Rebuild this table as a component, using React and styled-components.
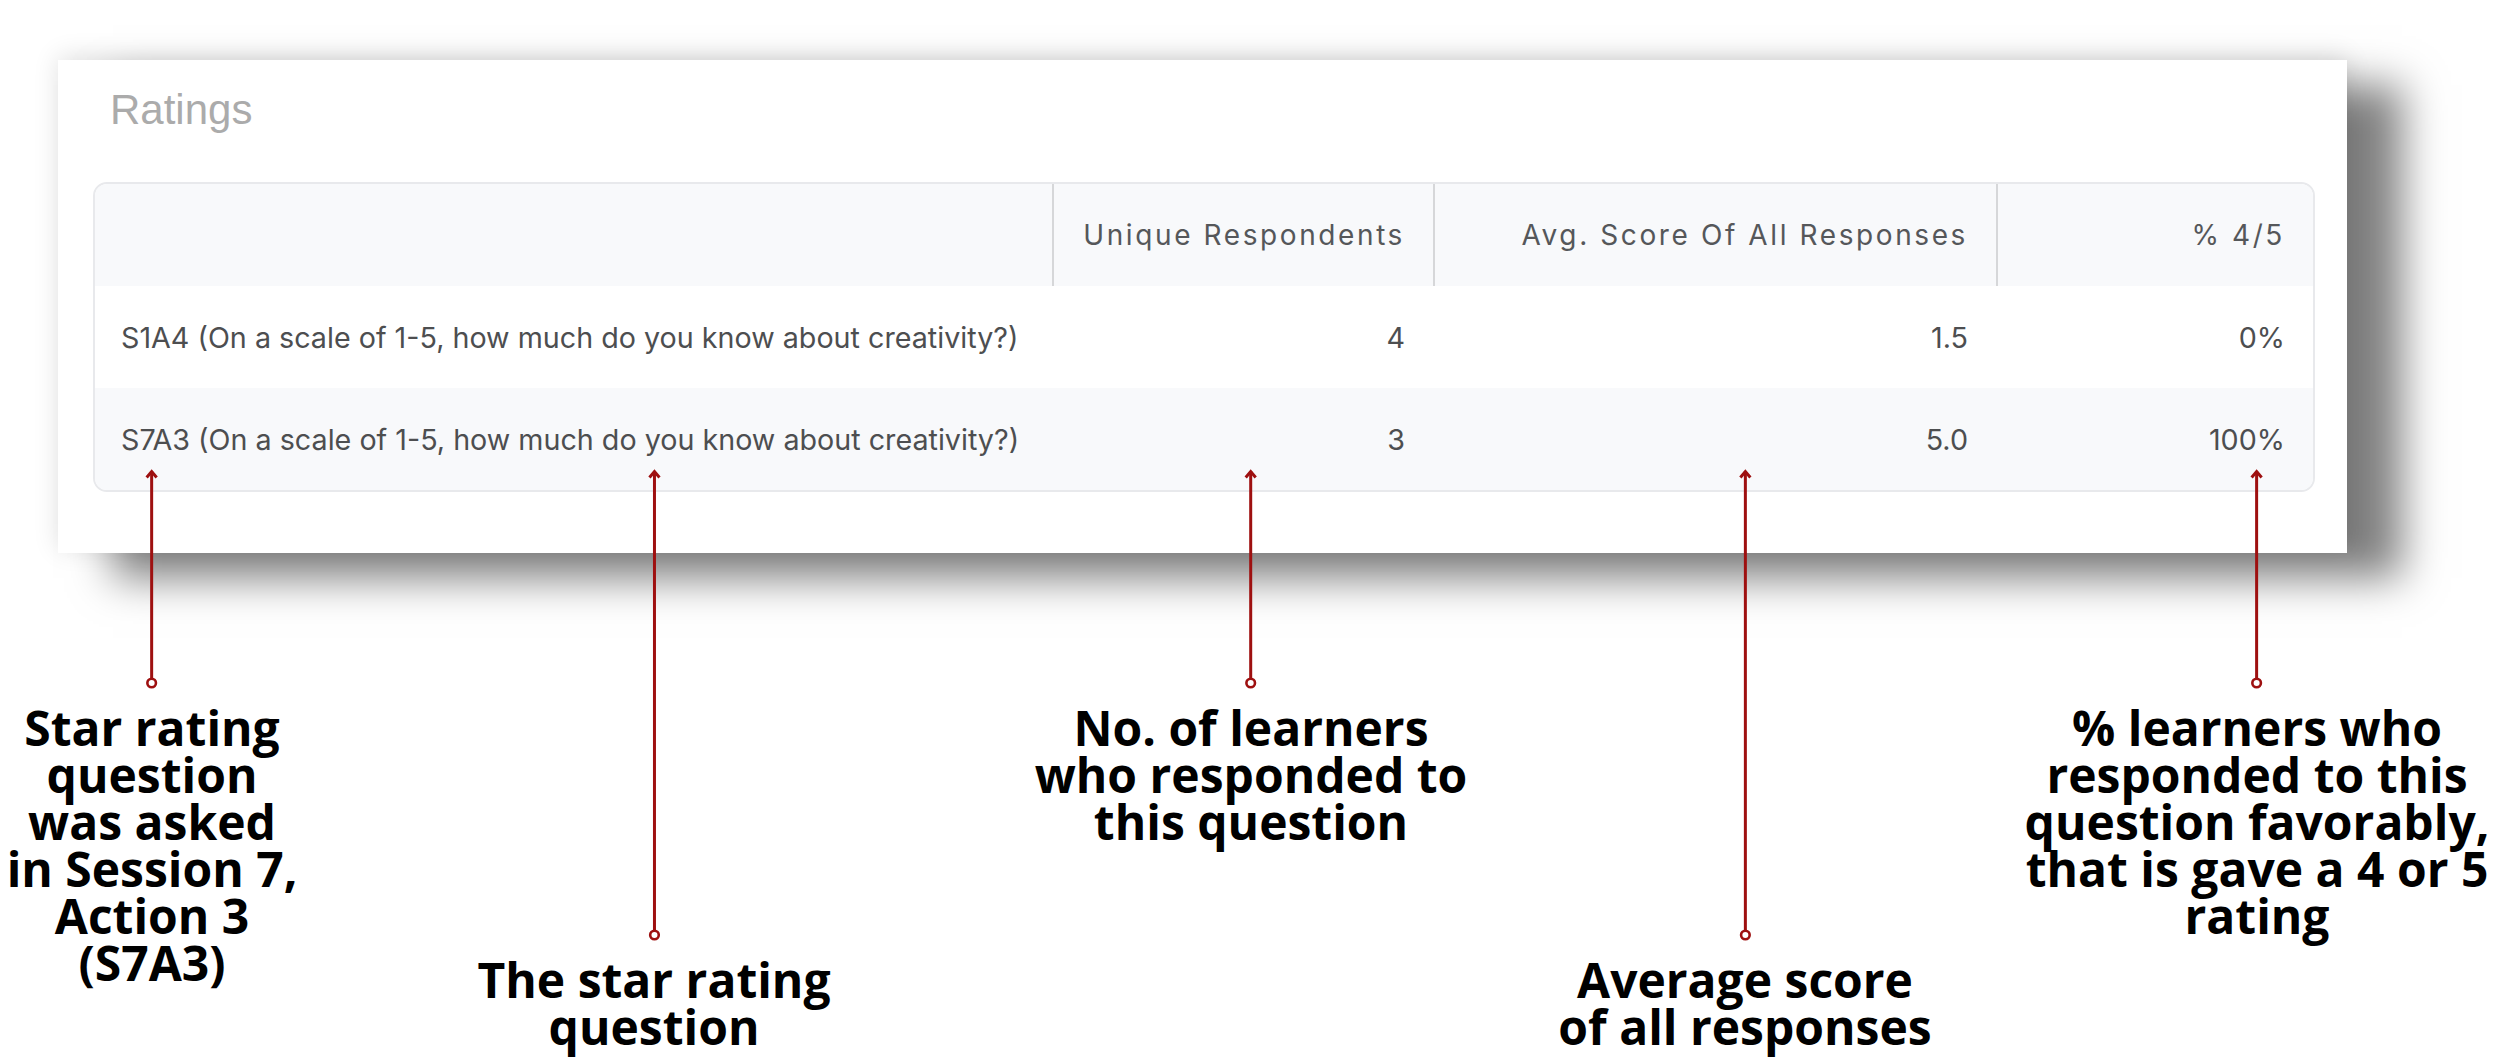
import React from 'react';
import styled, { createGlobalStyle } from 'styled-components';

const GlobalStyle = createGlobalStyle`
  html, body { margin: 0; padding: 0; background: #ffffff; }
  body { width: 2500px; height: 1059px; overflow: hidden; }
  * { box-sizing: border-box; }
`;

const Page = styled.div`
  position: relative;
  width: 2500px;
  height: 1059px;
  padding: 60px 0 0 58px;
`;

const Card = styled.section`
  width: 2289px;
  padding: 29px 32px 61px 35px;
  background: #ffffff;
  box-shadow: 55px 25px 40px rgba(0, 0, 0, 0.5), 0 -4px 24px rgba(0, 0, 0, 0.12);
`;

const Title = styled.h2`
  margin: 0 0 51px 17px;
  font-family: "Liberation Sans", Arial, sans-serif;
  font-weight: 400;
  font-size: 42px;
  line-height: 42px;
  color: #ababab;
`;

const Table = styled.div`
  width: 2222px;
  border: 2px solid #e8e9ec;
  border-radius: 14px;
  overflow: hidden;
  font-family: Inter, "Noto Sans", sans-serif;
`;

const COLS = '957px 381px 563px 1fr';

const HeadRow = styled.div`
  display: grid;
  grid-template-columns: ${COLS};
  height: 102px;
  background: #f8f9fb;
`;

const HeadCell = styled.div`
  display: flex;
  align-items: center;
  justify-content: flex-end;
  padding: 0 28px;
  font-size: 28px;
  letter-spacing: 2.6px;
  color: #55575a;
  white-space: nowrap;
  border-left: ${p => (p.$divider ? '2px solid #d6d7d9' : 'none')};
`;

const Row = styled.div`
  display: grid;
  grid-template-columns: ${COLS};
  height: 102px;
  background: ${p => (p.$striped ? '#f8f9fb' : '#ffffff')};
`;

const Cell = styled.div`
  display: flex;
  align-items: center;
  justify-content: ${p => (p.$left ? 'flex-start' : 'flex-end')};
  padding: ${p => (p.$left ? '0 0 0 26px' : '0 28px')};
  font-size: 28.7px;
  color: #4d4e50;
  white-space: nowrap;
`;

const Callout = styled.div`
  position: absolute;
  top: 468px;
  left: ${p => p.$x}px;
  transform: translateX(-50%);
  display: flex;
  flex-direction: column;
  align-items: center;
`;

const Label = styled.div`
  margin-top: 14px;
  font-family: "Open Sans", "Noto Sans", sans-serif;
  font-weight: 700;
  font-size: 48px;
  line-height: 47px;
  color: #000000;
  text-align: center;
  white-space: nowrap;
`;

const Arrow = ({ length }) => {
  const c = length - 7;
  return (
    <svg width="20" height={length} viewBox={`0 0 20 ${length}`} style={{ display: 'block' }}>
      <line x1="10" y1="3" x2="10" y2={c - 4.5} stroke="#9e1010" strokeWidth="3" />
      <polyline points="5,9.5 10,3.5 15,9.5" fill="none" stroke="#9e1010" strokeWidth="3" strokeLinejoin="miter" />
      <circle cx="10" cy={c} r="4.3" fill="none" stroke="#9e1010" strokeWidth="2.6" />
    </svg>
  );
};

const rows = [
  { q: 'S1A4 (On a scale of 1-5, how much do you know about creativity?)', n: '4', avg: '1.5', pct: '0%' },
  { q: 'S7A3 (On a scale of 1-5, how much do you know about creativity?)', n: '3', avg: '5.0', pct: '100%' },
];

const callouts = [
  { x: 152, len: 222, lines: ['Star rating', 'question', 'was asked', 'in Session 7,', 'Action 3', '(S7A3)'] },
  { x: 654, len: 474, lines: ['The star rating', 'question'] },
  { x: 1251, len: 222, lines: ['No. of learners', 'who responded to', 'this question'] },
  { x: 1745, len: 474, lines: ['Average score', 'of all responses'] },
  { x: 2257, len: 222, lines: ['% learners who', 'responded to this', 'question favorably,', 'that is gave a 4 or 5', 'rating'] },
];

export default function App() {
  return (
    <>
      <GlobalStyle />
      <Page>
        <Card>
          <Title>Ratings</Title>
          <Table>
            <HeadRow>
              <HeadCell />
              <HeadCell $divider>Unique Respondents</HeadCell>
              <HeadCell $divider>Avg. Score Of All Responses</HeadCell>
              <HeadCell $divider>% 4/5</HeadCell>
            </HeadRow>
            {rows.map((r, i) => (
              <Row key={r.q} $striped={i % 2 === 1}>
                <Cell $left>{r.q}</Cell>
                <Cell>{r.n}</Cell>
                <Cell>{r.avg}</Cell>
                <Cell>{r.pct}</Cell>
              </Row>
            ))}
          </Table>
        </Card>
        {callouts.map(c => (
          <Callout key={c.x} $x={c.x}>
            <Arrow length={c.len} />
            <Label>
              {c.lines.map((l, i) => (
                <React.Fragment key={i}>
                  {l}
                  {i < c.lines.length - 1 && <br />}
                </React.Fragment>
              ))}
            </Label>
          </Callout>
        ))}
      </Page>
    </>
  );
}
